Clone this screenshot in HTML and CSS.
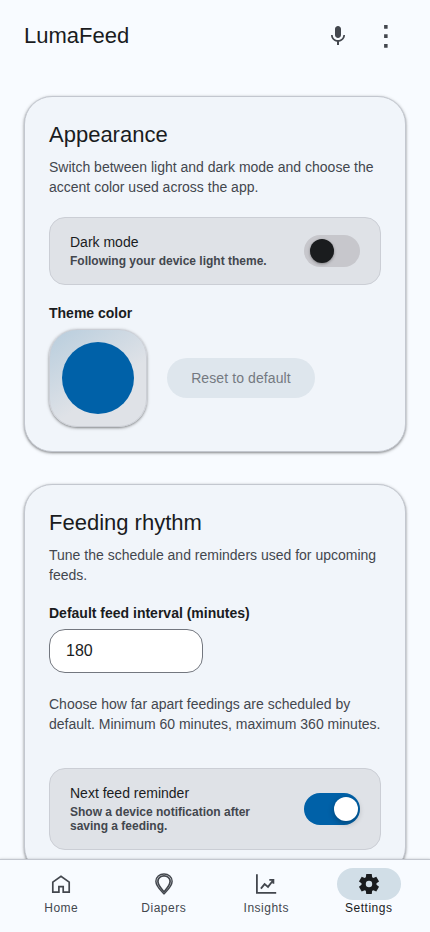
FILE: index.html
```html
<!DOCTYPE html>
<html lang="en">
<head>
<meta charset="utf-8">
<meta name="viewport" content="width=device-width, initial-scale=1">
<title>LumaFeed</title>
<link rel="stylesheet" href="styles.css">
</head>
<body>
<div class="app">
  <header class="topbar">
    <div class="brand">LumaFeed</div>
    <div class="actions">
      <button class="icon-btn" aria-label="Voice"><svg width="24" height="24" viewBox="0 0 24 24" fill="currentColor"><path d="M12 14c1.66 0 2.99-1.34 2.99-3L15 5c0-1.66-1.34-3-3-3S9 3.34 9 5v6c0 1.66 1.34 3 3 3zm5.3-3c0 3-2.54 5.1-5.3 5.1S6.7 14 6.7 11H5c0 3.41 2.72 6.23 6 6.72V21h2v-3.28c3.28-.48 6-3.3 6-6.72h-1.7z"/></svg></button>
      <button class="icon-btn" aria-label="More"><svg width="24" height="24" viewBox="0 0 24 24" fill="currentColor"><path d="M10.100 1h3.500v3.700h-3.500zM10.100 10.300h3.500v3.700h-3.500zM10.100 20h3.500v3.700h-3.500z"/></svg></button>
    </div>
  </header>
  <main class="content">
    <section class="card">
      <h2>Appearance</h2>
      <p class="copy">Switch between light and dark mode and choose the accent color used across the app.</p>
      <div class="setting">
        <div class="setting-text">
          <span class="setting-title">Dark mode</span>
          <span class="setting-note">Following your device light theme.</span>
        </div>
        <span class="switch"><span class="thumb"></span></span>
      </div>
      <div class="label theme-label">Theme color</div>
      <div class="theme-row">
        <div class="swatch"><div class="swatch-color"></div></div>
        <button class="reset" disabled>Reset to default</button>
      </div>
    </section>
    <section class="card">
      <h2>Feeding rhythm</h2>
      <p class="copy">Tune the schedule and reminders used for upcoming feeds.</p>
      <label class="label interval-label" for="interval">Default feed interval (minutes)</label>
      <input class="field" id="interval" type="text" value="180">
      <p class="copy help">Choose how far apart feedings are scheduled by default. Minimum 60 minutes, maximum 360 minutes.</p>
      <div class="setting reminder">
        <div class="setting-text">
          <span class="setting-title">Next feed reminder</span>
          <span class="setting-note">Show a device notification after saving a feeding.</span>
        </div>
        <span class="switch on"><span class="thumb"></span></span>
      </div>
    </section>
  </main>
  <nav class="bottom-nav">
    <a class="nav-item"><span class="pill"><svg width="24" height="24" viewBox="0 0 24 24" fill="none" stroke="currentColor" stroke-width="1.7"><path d="M3.800 10.100 12 4.300l8.200 5.800v10.100h-6v-5.500H9.900v5.500H3.800z"/></svg></span>Home</a>
    <a class="nav-item"><span class="pill"><svg width="24" height="24" viewBox="0 0 24 24" fill="none" stroke="currentColor"><path stroke-width="1.5" d="M12 21.800C8.700 18.300 3.900 14.300 3.900 9.200a8.100 7.300 0 0 1 16.200 0c0 5.100-4.800 9.100-8.100 12.600z"/><path stroke-width="1.7" d="M12 19.800C9.500 16.700 5.900 13.300 5.900 9.200a6.100 5.400 0 0 1 12.200 0c0 4.100-3.600 7.500-6.100 10.600z"/></svg></span>Diapers</a>
    <a class="nav-item"><span class="pill"><svg width="24" height="24" viewBox="0 0 24 24" fill="none" stroke="currentColor" stroke-width="1.8"><path d="M2.900 2.200v18.600h19.300"/><path d="m6.900 16.600 3.700-4.500 3.400 2.800 5-6.400M15.300 7.800h4.100v4"/></svg></span>Insights</a>
    <a class="nav-item active"><span class="pill"><svg width="24" height="24" viewBox="0 0 24 24" fill="currentColor"><path d="m9.250 22-.4-3.200q-.325-.125-.612-.3-.288-.175-.563-.375L4.700 19.375l-2.750-4.750 2.575-1.950Q4.500 12.500 4.500 12.338v-.675q0-.163.025-.338L1.950 9.375l2.750-4.750 2.975 1.250q.275-.2.575-.375.3-.175.6-.3l.4-3.200h5.500l.4 3.200q.325.125.613.3.287.175.562.375l2.975-1.250 2.750 4.750-2.575 1.950q.025.175.025.338v.675q0 .162-.05.337l2.575 1.950-2.750 4.750-2.950-1.250q-.275.2-.575.375-.3.175-.6.3l-.4 3.200ZM12 15.200a3.200 3.200 0 1 0 0-6.400 3.200 3.200 0 0 0 0 6.400z"/></svg></span>Settings</a>
  </nav>
</div>
</body>
</html>
```
FILE: styles.css
```css
* { box-sizing: border-box; }

body {
  margin: 0;
  background: #f8fbff;
  color: #1a1c1e;
  font-family: "Liberation Sans", Arial, sans-serif;
}

.app {
  display: flex;
  flex-direction: column;
  height: 100vh;
  overflow: hidden;
}

.topbar {
  display: flex;
  flex: none;
  align-items: center;
  justify-content: space-between;
  height: 72px;
  padding: 0 20px 0 24px;
}

.brand { font-size: 22px; line-height: 28px; }

.actions { display: flex; }

.icon-btn {
  display: grid;
  place-items: center;
  width: 48px;
  height: 48px;
  padding: 0;
  border: 0;
  background: none;
  color: #43474e;
}

.content {
  display: flex;
  flex: 1;
  flex-direction: column;
  gap: 32px;
  min-height: 0;
  padding: 24px 24px 0;
  overflow: hidden;
}

.card {
  flex: none;
  padding: 24px;
  border: 1px solid #c3c7cf;
  border-radius: 28px;
  background: #f1f5fa;
  box-shadow: 0 1px 2px rgba(0, 0, 0, .3), 0 1px 3px 1px rgba(0, 0, 0, .15);
}

h2 {
  margin: 0 0 8px;
  font-size: 22px;
  font-weight: 400;
  line-height: 28px;
}

.copy {
  margin: 0;
  color: #43474e;
  font-size: 14px;
  line-height: 20px;
}

.setting {
  display: flex;
  align-items: center;
  justify-content: space-between;
  height: 68px;
  margin-top: 20px;
  padding: 0 20px;
  border: 1px solid #cbced5;
  border-radius: 16px;
  background: #dfe2e7;
}

.setting-text {
  display: flex;
  flex-direction: column;
  width: 210px;
  padding-bottom: 2px;
}

.setting-title { font-size: 14px; line-height: 20px; }

.setting-note {
  margin-top: 2px;
  color: #43474e;
  font-size: 12px;
  font-weight: 700;
  line-height: 14px;
}

.switch {
  display: flex;
  align-items: center;
  width: 56px;
  height: 32px;
  padding: 0 6px;
  border-radius: 16px;
  background: #c7c7cc;
}

.switch.on { justify-content: flex-end; padding-right: 2px; background: #0061a8; }

.thumb {
  width: 24px;
  height: 24px;
  border-radius: 50%;
  background: #1a1c1e;
  box-shadow: 0 1px 3px rgba(0, 0, 0, .35);
}

.on .thumb { background: #fff; box-shadow: 0 2px 6px rgba(0, 0, 0, .3); }

.label {
  display: block;
  font-size: 14px;
  font-weight: 700;
  line-height: 20px;
}

.theme-label { margin-top: 18px; }
.theme-row { display: flex; align-items: center; gap: 20px; margin-top: 6px; }

.swatch {
  display: grid;
  place-items: center;
  width: 98px;
  height: 98px;
  border: 1px solid #cbced5;
  border-radius: 28px;
  background: linear-gradient(145deg, #b8cddd, #dfe2e7 60%);
  box-shadow: 0 1px 2px rgba(0, 0, 0, .3), 0 1px 3px 1px rgba(0, 0, 0, .15);
}

.swatch-color { width: 72px; height: 72px; border-radius: 50%; background: #0061a8; }

.reset {
  width: 148px;
  height: 40px;
  padding: 0;
  border: 0;
  border-radius: 20px;
  background: #dee6ed;
  color: #747981;
  font-family: inherit;
  font-size: 14px;
  letter-spacing: .1px;
}

.interval-label { margin-top: 18px; }

.field {
  display: block;
  width: 154px;
  height: 44px;
  margin-top: 6px;
  padding: 0 16px;
  border: 1px solid #73777f;
  border-radius: 16px;
  background: #fff;
  color: #1a1c1e;
  font-family: inherit;
  font-size: 16px;
}

.help { margin-top: 21px; }
.reminder { height: 82px; margin-top: 34px; }

.bottom-nav {
  display: flex;
  flex: none;
  z-index: 1;
  height: 73px;
  padding: 8px 10px 0;
  border-top: 1px solid #c3c7cf;
  background: #f8fbff;
  box-shadow: 0 1px 2px rgba(0, 0, 0, .3), 0 1px 3px 1px rgba(0, 0, 0, .15);
}

.nav-item {
  display: flex;
  flex: 1;
  flex-direction: column;
  align-items: center;
  color: #43474e;
  font-size: 12px;
  line-height: 16px;
  letter-spacing: .5px;
}

.pill {
  display: grid;
  place-items: center;
  width: 64px;
  height: 32px;
  border-radius: 16px;
}

.active { color: #1a1c1e; }
.active .pill { background: #d1dee7; }
```
